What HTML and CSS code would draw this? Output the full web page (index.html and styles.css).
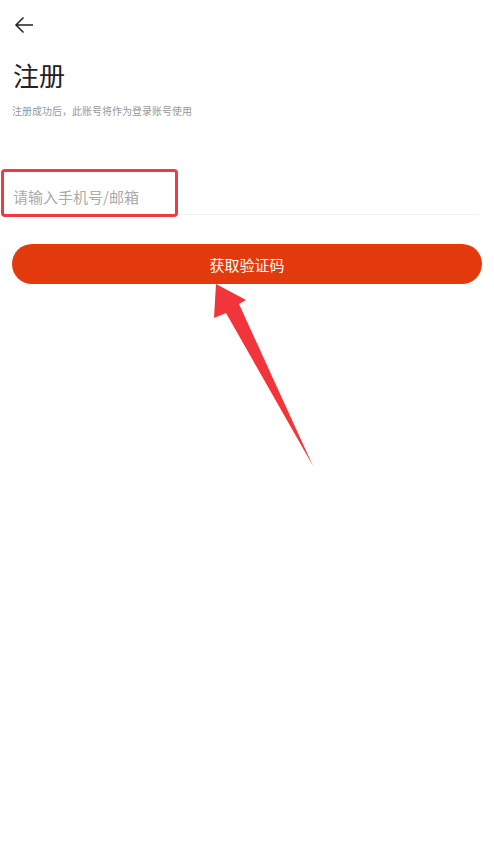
FILE: index.html
```html
<!DOCTYPE html>
<html lang="zh">
<head>
<meta charset="utf-8">
<link rel="stylesheet" href="styles.css">
</head>
<body>
<div class="page">
  <div class="topbar">
    <svg class="back" width="20" height="18" viewBox="0 0 20 18"><path d="M19 9H2M9.5 1.5L2 9l7.5 7.5" fill="none" stroke="#222" stroke-width="1.5"/></svg>
  </div>
  <h1 class="title">注册</h1>
  <p class="subtitle">注册成功后，此账号将作为登录账号使用</p>
  <div class="field">
    <div class="input">请输入手机号/邮箱</div>
    <div class="highlight"></div>
  </div>
  <button class="btn">获取验证码</button>
  <svg class="pointer" width="494" height="866" viewBox="0 0 494 866"><polygon points="216,284 246,300 239,304 313,466 226,313 214,318" fill="#f2353b"/></svg>
</div>
</body>
</html>
```
FILE: styles.css
```css
* { box-sizing: border-box; }
html, body { margin: 0; padding: 0; background: #fff; }
body { font-family: "Noto Sans CJK SC", "Noto Sans", sans-serif; width: 494px; height: 866px; overflow: hidden; }
.page { position: relative; padding: 0 12px; height: 866px; }
.topbar { height: 50px; padding-top: 16px; padding-left: 2px; }
.back { display: block; }
.title { margin: 7px 0 0 1px; font-size: 26px; font-weight: 400; line-height: 36px; color: #222; }
.subtitle { margin: 11px 0 0 0; font-size: 10px; line-height: 14px; color: #999; }
.field { position: relative; margin-top: 56px; width: 467px; border-bottom: 1px solid #f0f0f0; height: 41px; }
.input { font-size: 15px; color: #aaa; line-height: 20px; padding-top: 13px; padding-left: 1px; }
.highlight { position: absolute; left: -11px; top: -5px; width: 177px; height: 48px; border: 3px solid #ee3a42; border-radius: 4px; }
.btn { display: block; margin-top: 29px; width: 470px; height: 40px; border: none; border-radius: 20px; background: #e23a0d; color: #fff; font-family: inherit; font-size: 15px; padding: 0; }
.pointer { position: absolute; left: 0; top: 0; pointer-events: none; }
```
